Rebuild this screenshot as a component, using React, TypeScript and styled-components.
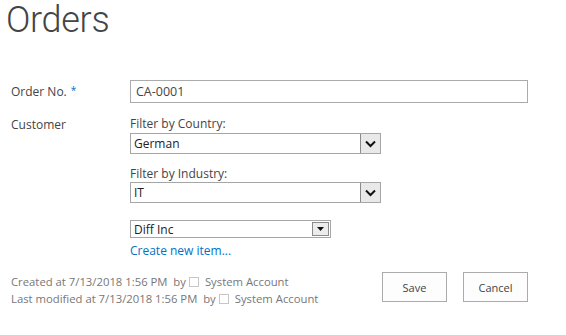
import styled, { createGlobalStyle } from "styled-components";

const GlobalStyle = createGlobalStyle`
  body {
    margin: 0;
    background: #ffffff;
    font-family: "Open Sans", "Noto Sans", sans-serif;
    color: #444444;
  }
`;

const Page = styled.div`
  width: 566px;
  height: 335px;
  padding: 0 38px 0 11px;
  box-sizing: border-box;
  display: flex;
  flex-direction: column;
`;

const Title = styled.h1`
  margin: 0 0 0 -5px;
  font-family: Roboto, "Open Sans", sans-serif;
  font-size: 36px;
  font-weight: 300;
  line-height: 40px;
  color: #444444;
  height: 80px;
  letter-spacing: -0.3px;
`;

const FormGrid = styled.div`
  display: grid;
  grid-template-columns: 119px 1fr;
  row-gap: 13px;
  font-size: 12px;
`;

const Label = styled.div<{ $top?: number }>`
  padding-top: ${(p) => p.$top ?? 0}px;
  line-height: 16px;
`;

const Req = styled.span`
  color: #0072c6;
  margin-left: 4px;
  font-size: 10px;
  vertical-align: 2px;
`;

const TextBox = styled.div`
  height: 23px;
  box-sizing: border-box;
  border: 1px solid #ababab;
  padding: 0 5px;
  display: flex;
  align-items: center;
  font-size: 12.5px;
`;

const Field = styled.div`
  display: flex;
  flex-direction: column;
`;

const FilterLabel = styled.div<{ $gap?: number }>`
  line-height: 16px;
  margin-top: ${(p) => p.$gap ?? 0}px;
`;

const Select = styled.div<{ $w: number; $h: number; $gap: number }>`
  width: ${(p) => p.$w}px;
  height: ${(p) => p.$h}px;
  box-sizing: border-box;
  border: 1px solid #a6a6a6;
  display: flex;
  align-items: stretch;
  font-size: 12px;
  margin-top: ${(p) => p.$gap}px;
`;

const SelectText = styled.div`
  flex: 1;
  display: flex;
  align-items: center;
  padding-left: 3px;
  color: #222;
`;

const ChevronBtn = styled.div`
  width: 19px;
  background: #e9e9e9;
  border-left: 1px solid #8a8a8a;
  display: flex;
  align-items: center;
  justify-content: center;
`;

const ArrowBtn = styled.div`
  width: 15px;
  margin: 1px;
  background: #ececec;
  border: 1px solid #8a8a8a;
  display: flex;
  align-items: center;
  justify-content: center;
`;

const NewLink = styled.a`
  color: #0072c6;
  text-decoration: none;
  line-height: 16px;
  margin-top: 5px;
  font-size: 12px;
`;

const Footer = styled.div`
  display: flex;
  align-items: flex-start;
  justify-content: space-between;
  margin-top: 14px;
`;

const Meta = styled.div`
  font-size: 11.3px;
  color: #777777;
  line-height: 17px;
`;

const Box = styled.span`
  display: inline-block;
  width: 8px;
  height: 8px;
  border: 1px solid #c6c6c6;
  margin: 0 6px 0 3px;
  vertical-align: -1px;
`;

const Buttons = styled.div`
  display: flex;
  gap: 16px;
  margin-top: -1px;
`;

const Button = styled.button`
  width: 65px;
  height: 30px;
  box-sizing: border-box;
  border: 1px solid #ababab;
  background: #fdfdfd;
  font-family: inherit;
  font-size: 11px;
  color: #444444;
  padding: 0;
`;

const Chevron = () => (
  <svg width="11" height="8" viewBox="0 0 11 8">
    <path d="M1 1.5 L5.5 6 L10 1.5" stroke="#111" strokeWidth="2" fill="none" />
  </svg>
);

const Triangle = () => (
  <svg width="7" height="4" viewBox="0 0 7 4">
    <path d="M0 0 H7 L3.5 4 Z" fill="#111" />
  </svg>
);

export default function App() {
  return (
    <Page>
      <GlobalStyle />
      <Title>Orders</Title>
      <FormGrid>
        <Label $top={2}>
          Order No.<Req>*</Req>
        </Label>
        <TextBox>CA-0001</TextBox>
        <Label $top={1}>Customer</Label>
        <Field>
          <FilterLabel>Filter by Country:</FilterLabel>
          <Select $w={251} $h={21} $gap={1}>
            <SelectText>German</SelectText>
            <ChevronBtn>
              <Chevron />
            </ChevronBtn>
          </Select>
          <FilterLabel $gap={12}>Filter by Industry:</FilterLabel>
          <Select $w={251} $h={21} $gap={0}>
            <SelectText>IT</SelectText>
            <ChevronBtn>
              <Chevron />
            </ChevronBtn>
          </Select>
          <Select $w={201} $h={18} $gap={17}>
            <SelectText>Diff Inc</SelectText>
            <ArrowBtn>
              <Triangle />
            </ArrowBtn>
          </Select>
          <NewLink href="#">Create new item...</NewLink>
        </Field>
      </FormGrid>
      <Footer>
        <Meta>
          <div>
            Created at 7/13/2018 1:56 PM&nbsp; by<Box />System Account
          </div>
          <div>
            Last modified at 7/13/2018 1:56 PM&nbsp; by<Box />System Account
          </div>
        </Meta>
        <Buttons>
          <Button>Save</Button>
          <Button>Cancel</Button>
        </Buttons>
      </Footer>
    </Page>
  );
}
